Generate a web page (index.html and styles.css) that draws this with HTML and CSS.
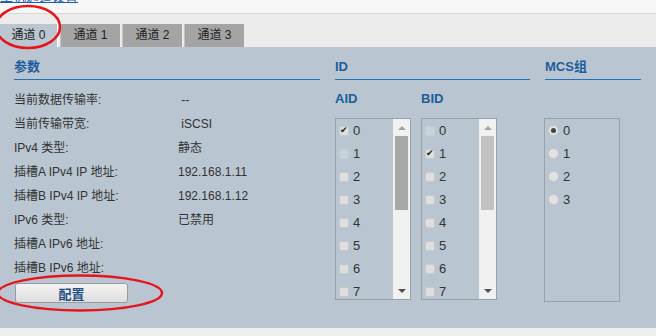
FILE: index.html
```html
<!DOCTYPE html>
<html lang="zh-CN">
<head>
    <meta charset="UTF-8">
    <meta name="viewport" content="width=device-width, initial-scale=1.0">
    <title>主机通道设置</title>
    <link rel="stylesheet" href="styles.css">
</head>
<body>
    <!-- Título da página (cortado no topo) -->
    <div class="title"><a href="#">主机通道设置</a></div>

    <!-- Abas dos canais -->
    <div class="tabs">
        <div class="tab active">通道 0</div>
        <div class="tab">通道 1</div>
        <div class="tab">通道 2</div>
        <div class="tab">通道 3</div>
    </div>

    <div class="panel">
        <section class="params">
            <h3 class="sect-head">参数</h3>
            <div class="rows">
                <div class="row"><span class="lbl">当前数据传输率:</span><span class="val">&nbsp;--</span></div>
                <div class="row"><span class="lbl">当前传输带宽:</span><span class="val">&nbsp;iSCSI</span></div>
                <div class="row"><span class="lbl">IPv4 类型:</span><span class="val">静态</span></div>
                <div class="row"><span class="lbl">插槽A IPv4 IP 地址:</span><span class="val">192.168.1.11</span></div>
                <div class="row"><span class="lbl">插槽B IPv4 IP 地址:</span><span class="val">192.168.1.12</span></div>
                <div class="row"><span class="lbl">IPv6 类型:</span><span class="val">已禁用</span></div>
                <div class="row"><span class="lbl">插槽A IPv6 地址:</span><span class="val"></span></div>
                <div class="row"><span class="lbl">插槽B IPv6 地址:</span><span class="val"></span></div>
            </div>
            <button class="btn">配置</button>
        </section>

        <section class="ids">
            <h3 class="sect-head">ID</h3>
            <div class="lists">
                <div class="group">
                    <div class="sub-head">AID</div>
                    <div class="listbox">
                        <div class="items">
                            <div class="item"><span class="chk on"></span>0</div>
                            <div class="item"><span class="chk off"></span>1</div>
                            <div class="item"><span class="chk"></span>2</div>
                            <div class="item"><span class="chk"></span>3</div>
                            <div class="item"><span class="chk"></span>4</div>
                            <div class="item"><span class="chk"></span>5</div>
                            <div class="item"><span class="chk"></span>6</div>
                            <div class="item"><span class="chk"></span>7</div>
                        </div>
                        <div class="sbar">
                            <span class="arr up"></span>
                            <span class="thumb"></span>
                            <span class="fill"></span>
                            <span class="arr down"></span>
                        </div>
                    </div>
                </div>
                <div class="group">
                    <div class="sub-head">BID</div>
                    <div class="listbox">
                        <div class="items">
                            <div class="item"><span class="chk off"></span>0</div>
                            <div class="item"><span class="chk on"></span>1</div>
                            <div class="item"><span class="chk"></span>2</div>
                            <div class="item"><span class="chk"></span>3</div>
                            <div class="item"><span class="chk"></span>4</div>
                            <div class="item"><span class="chk"></span>5</div>
                            <div class="item"><span class="chk"></span>6</div>
                            <div class="item"><span class="chk"></span>7</div>
                        </div>
                        <div class="sbar light">
                            <span class="arr up"></span>
                            <span class="thumb"></span>
                            <span class="fill"></span>
                            <span class="arr down"></span>
                        </div>
                    </div>
                </div>
            </div>
        </section>

        <section class="mcs">
            <h3 class="sect-head">MCS组</h3>
            <div class="radiobox">
                <div class="item"><span class="radio on"></span>0</div>
                <div class="item"><span class="radio"></span>1</div>
                <div class="item"><span class="radio"></span>2</div>
                <div class="item"><span class="radio"></span>3</div>
            </div>
        </section>
    </div>

    <div class="footer"></div>

    <!-- Marcações em vermelho por cima da tela -->
    <svg class="marks" width="656" height="336" viewBox="0 0 656 336">
        <ellipse cx="28" cy="27" rx="32" ry="21" fill="none" stroke="#e8141b" stroke-width="2.5"/>
        <ellipse cx="80" cy="293" rx="82" ry="17.5" fill="none" stroke="#e8141b" stroke-width="2.5"/>
    </svg>
</body>
</html>
```

FILE: styles.css
```css
* {
    margin: 0;
    padding: 0;
    box-sizing: border-box;
}
html, body {
    width: 100%;
    height: 100%;
    overflow: hidden;
}
body {
    background-color: #efefef;
    font-family: "Liberation Sans", "Noto Sans CJK SC", sans-serif;
    font-size: 12px;
    color: #333;
    position: relative;
}
.title {
    height: 14px;
    background-color: #f7f7f7;
    border-bottom: 1px solid #d9d9d9;
    overflow: hidden;
}
.title a {
    display: block;
    margin-top: -10px;
    font-size: 13px;
    line-height: 14px;
    color: #1a5fb4;
    text-decoration: underline;
}
.tabs {
    display: flex;
    gap: 2px;
    height: 33px;
    padding-top: 10px;
    background-color: #ececec;
}
.tab {
    width: 60px;
    height: 23px;
    line-height: 23px;
    text-align: center;
    background-color: #a4a4a4;
    border-left: 1px solid #c4c4c4;
    color: #222;
}
.tab.active {
    width: 58px;
    background-color: #bac7d1;
    border-left: none;
    border-right: 1px solid #ffffff;
}
.panel {
    height: 281px;
    background-color: #b9c6d1;
    display: grid;
    grid-template-columns: 306px 195px 96px;
    column-gap: 15px;
    padding: 12px 15px 0 14px;
    align-items: start;
}
.sect-head {
    font-size: 13px;
    font-weight: bold;
    line-height: 16px;
    color: #1d5d9b;
    padding-bottom: 4px;
    border-bottom: 1px solid #1f72b8;
}
.rows {
    margin-top: 8px;
}
.row {
    display: flex;
    height: 24px;
    line-height: 24px;
}
.lbl {
    width: 164px;
}
.btn {
    display: block;
    margin: 3px 0 0 1px;
    width: 113px;
    height: 20px;
    border: 1px solid #9a9a9a;
    border-radius: 3px;
    background: linear-gradient(#f3f3f3, #dedede);
    font-family: inherit;
    font-size: 13px;
    font-weight: bold;
    color: #1d4f86;
}
.lists {
    display: flex;
    gap: 10px;
}
.sub-head {
    margin-top: 11px;
    font-size: 13px;
    font-weight: bold;
    line-height: 16px;
    color: #1d5d9b;
}
.listbox {
    display: flex;
    width: 76px;
    height: 182px;
    margin-top: 11px;
    border: 1px solid #99a1a8;
    overflow: hidden;
}
.items {
    flex: 1;
}
.item {
    display: flex;
    align-items: center;
    height: 23px;
    padding-left: 3px;
    font-size: 13px;
    color: #333;
}
.chk {
    width: 10px;
    height: 10px;
    margin-right: 4px;
    border: 1px solid #c9c9c9;
    border-radius: 2px;
    background-color: #dedede;
    display: flex;
    align-items: center;
    justify-content: center;
    font-size: 9px;
    line-height: 1;
    color: #222;
}
.chk.off {
    background-color: #c9d1d9;
    border-color: #c4ccd4;
}
.chk.on::after {
    content: "\2714";
}
.sbar {
    width: 17px;
    display: flex;
    flex-direction: column;
    background-color: #f1f1f1;
}
.arr {
    height: 17px;
    display: flex;
    align-items: center;
    justify-content: center;
}
.arr::after {
    content: "";
    border-left: 4px solid transparent;
    border-right: 4px solid transparent;
}
.arr.up::after {
    border-bottom: 4px solid #a3a3a3;
}
.arr.down::after {
    border-top: 4px solid #505050;
}
.thumb {
    height: 74px;
    margin: 0 2px;
    background-color: #a8a8a8;
}
.sbar.light .thumb {
    background-color: #c1c1c1;
}
.fill {
    flex: 1;
}
.radiobox {
    width: 76px;
    height: 184px;
    margin: 38px 0 0 -1px;
    border: 1px solid #99a1a8;
}
.radio {
    width: 11px;
    height: 11px;
    margin-right: 4px;
    border: 1px solid #c6c6c6;
    border-radius: 50%;
    background-color: #e2e2e2;
    display: flex;
    align-items: center;
    justify-content: center;
}
.radio.on::after {
    content: "";
    width: 5px;
    height: 5px;
    border-radius: 50%;
    background-color: #444;
}
.footer {
    height: 8px;
    background-color: #efefef;
}
.marks {
    position: absolute;
    top: 0;
    left: 0;
    pointer-events: none;
}
```
